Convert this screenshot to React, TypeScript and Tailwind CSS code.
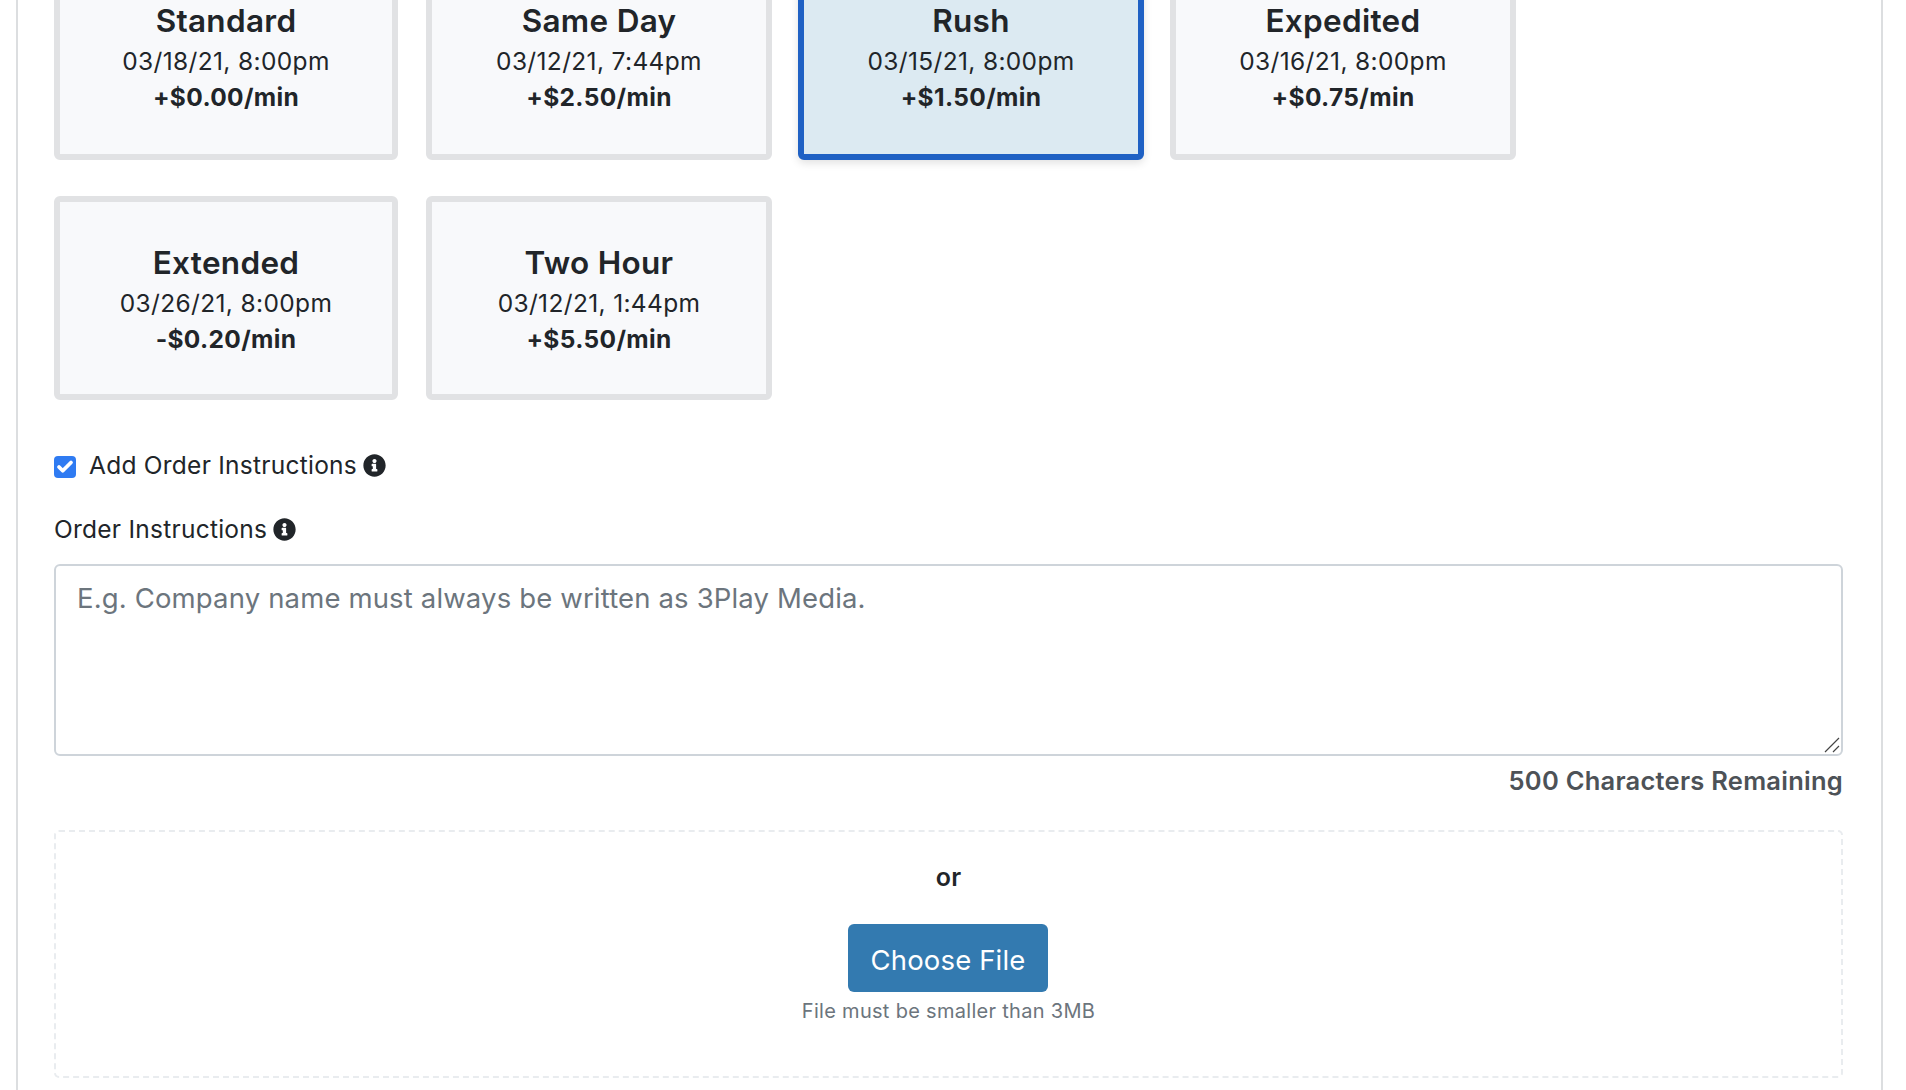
import { Check } from 'lucide-react';

const font = { fontFamily: 'Inter, "Liberation Sans", sans-serif' };

const rows = [
    [
        { name: 'Standard', date: '03/18/21, 8:00pm', price: '+$0.00/min' },
        { name: 'Same Day', date: '03/12/21, 7:44pm', price: '+$2.50/min' },
        { name: 'Rush', date: '03/15/21, 8:00pm', price: '+$1.50/min', selected: true },
        { name: 'Expedited', date: '03/16/21, 8:00pm', price: '+$0.75/min' },
    ],
    [
        { name: 'Extended', date: '03/26/21, 8:00pm', price: '-$0.20/min' },
        { name: 'Two Hour', date: '03/12/21, 1:44pm', price: '+$5.50/min' },
    ],
];

function InfoIcon() {
    return (
        <svg viewBox="0 0 512 512" className="w-[23px] h-[23px] fill-[#212529] ml-[6px] shrink-0">
            <path d="M256 8C119 8 8 119 8 256s111 248 248 248 248-111 248-248S393 8 256 8zm0 102c25.4 0 46 20.6 46 46s-20.6 46-46 46-46-20.6-46-46 20.6-46 46-46zm64 268c0 6.6-5.4 12-12 12H204c-6.6 0-12-5.4-12-12v-30c0-6.6 5.4-12 12-12h14v-64h-14c-6.6 0-12-5.4-12-12v-30c0-6.6 5.4-12 12-12h76c6.6 0 12 5.4 12 12v106h16c6.6 0 12 5.4 12 12v30z" />
        </svg>
    );
}

function TurnaroundCard({ name, date, price, selected = false }: { name: string; date: string; price: string; selected?: boolean }) {
    return (
        <div
            className={
                selected
                    ? 'w-[346px] first:w-[344px] first:mr-[2px] h-full pt-[2px] flex flex-col items-center justify-center rounded-[6px] border-[6px] border-[#1f61c4] bg-[#dceaf2] shadow-[0_3px_8px_rgba(0,0,0,0.12)] text-[#212529]'
                    : 'w-[346px] first:w-[344px] first:mr-[2px] h-full pt-[2px] flex flex-col items-center justify-center rounded-[6px] border-[6px] border-[#e1e2e4] bg-[#f8f9fb] text-[#212529]'
            }
        >
            <div className="text-[31.5px] leading-[44px] font-semibold tracking-[0.3px]">{name}</div>
            <div className="text-[24.5px] leading-[36px] tracking-[0.35px]">{date}</div>
            <div className="text-[24.5px] leading-[36px] mb-[1px] font-bold tracking-[0.35px]">{price}</div>
        </div>
    );
}

export default function App() {
    return (
        <div style={font} className="h-[1090px] overflow-hidden bg-white text-[#212529]">
            <div className="mx-[16px] w-[1867px] h-[1200px] mt-[-48px] border-x-[2px] border-[#dcdee0] pl-[36px] pr-[38px]">
                <div className="flex flex-col gap-[36px]">
                    {rows.map((row, i) => (
                        <div key={i} className={i === 0 ? 'flex gap-[26px] h-[208px]' : 'flex gap-[26px] h-[204px]'}>
                            {row.map((card) => (
                                <TurnaroundCard key={card.name} {...card} />
                            ))}
                        </div>
                    ))}
                </div>

                <div className="flex items-center mt-[49px] h-[32px]">
                    <div className="w-[22px] h-[22px] mt-[4px] rounded-[4px] bg-[#2f7bf2] flex items-center justify-center mr-[13px]">
                        <Check className="w-[18px] h-[18px] text-white" strokeWidth={5} />
                    </div>
                    <span className="text-[24.5px] leading-[32px] tracking-[0.25px]">Add Order Instructions</span>
                    <InfoIcon />
                </div>

                <div className="flex items-center mt-[32px] h-[32px]">
                    <span className="text-[24.5px] leading-[32px] tracking-[0.25px]">Order Instructions</span>
                    <InfoIcon />
                </div>

                <div className="relative mt-[19px] h-[192px] rounded-[6px] border-[2px] border-[#ced4da] px-[21px] py-[11px]">
                    <span className="text-[27.5px] leading-[42px] tracking-[0.15px] text-[#6c757d]">E.g. Company name must always be written as 3Play Media.</span>
                    <svg viewBox="0 0 16 16" className="absolute right-[1px] bottom-[1px] w-[16px] h-[16px] stroke-[#444]" fill="none">
                        <path d="M1 15 15 1M9 15l6-6" strokeWidth="1.2" />
                    </svg>
                </div>

                <div className="text-right text-[25.5px] leading-[32px] font-semibold tracking-[0.25px] text-[#4d5257] mt-[9px]">500 Characters Remaining</div>

                <div className="mt-[33px] h-[248px] rounded-[5px] border-[2px] border-dashed border-[#e9ecef] flex flex-col items-center pt-[27px]">
                    <div className="text-[25px] leading-[36px] font-semibold tracking-[0.2px]">or</div>
                    <button className="mt-[29px] mr-[2px] w-[200px] h-[68px] pt-[5px] pl-[1px] rounded-[6px] bg-[#337ab0] text-white text-[27.5px] tracking-[0.15px]">Choose File</button>
                    <div className="text-[20px] leading-[30px] tracking-[0.3px] text-[#6c757d] mt-[4px]">File must be smaller than 3MB</div>
                </div>
            </div>
        </div>
    );
}
